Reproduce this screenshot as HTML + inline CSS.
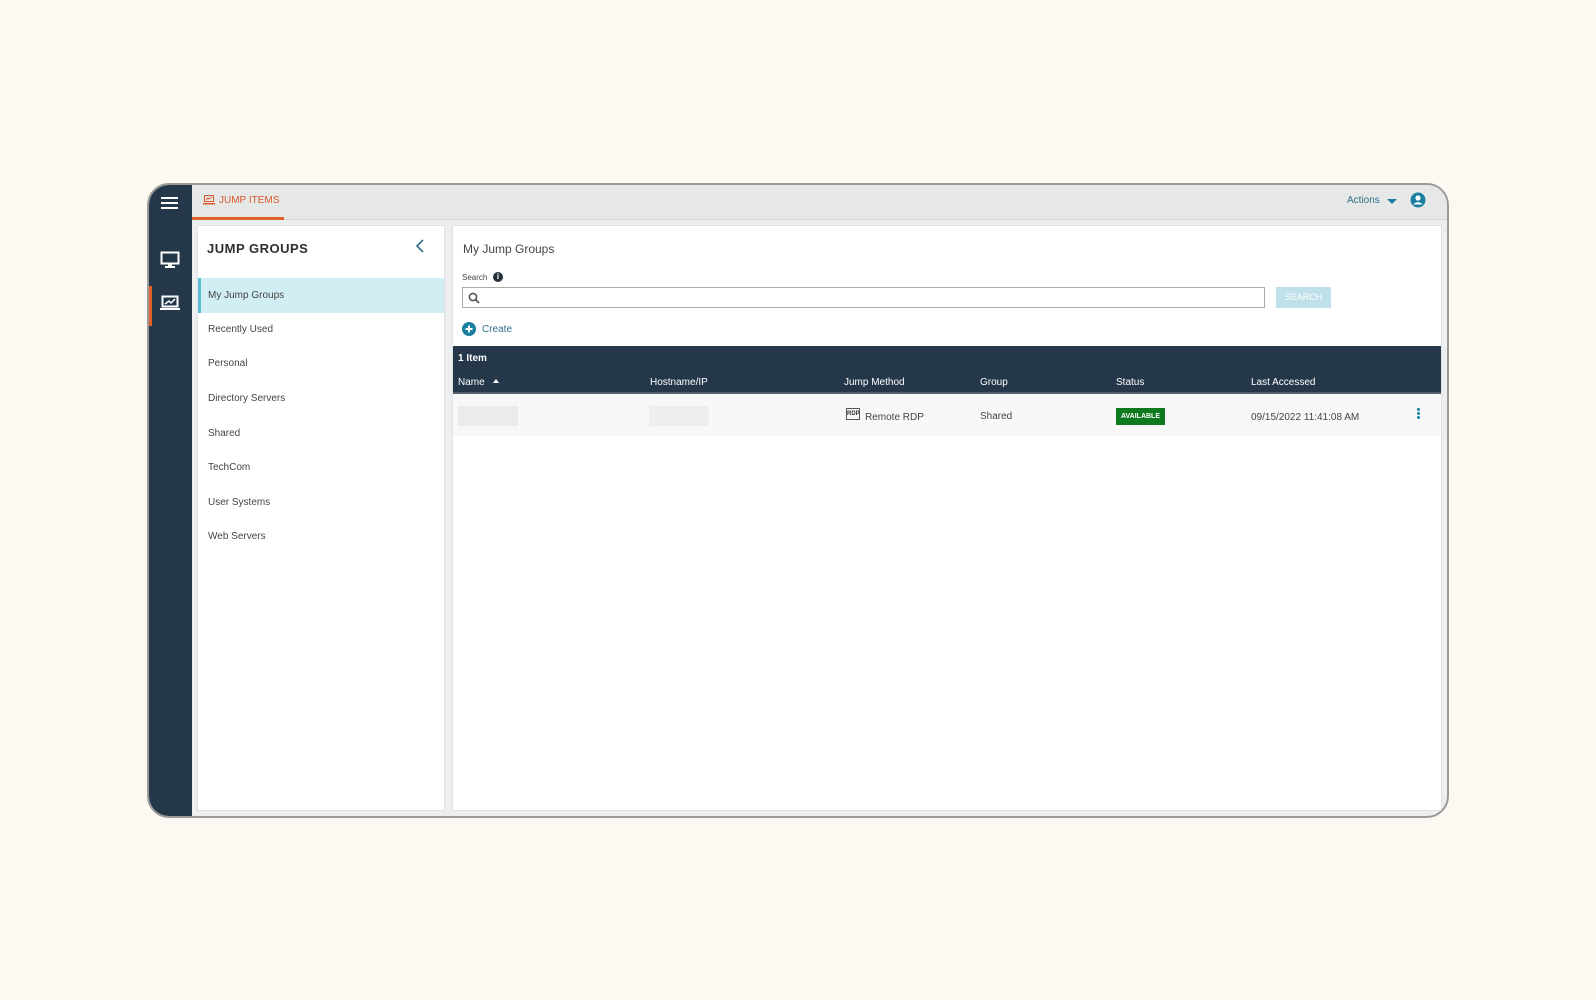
<!DOCTYPE html>
<html><head><meta charset="utf-8"><style>
*{box-sizing:border-box;margin:0;padding:0}
body{width:1596px;height:1000px;background:#fcf8f2;font-family:"Liberation Sans",sans-serif;position:relative;overflow:hidden;color:#333}
.frame{position:absolute;left:147px;top:183px;width:1302px;height:635px;border:2px solid #9a9a98;border-radius:22px;overflow:hidden;background:#eceeef}
.side{position:absolute;left:0;top:0;width:43px;height:100%;background:#25384a}
.top{position:absolute;left:43px;top:0;right:0;height:35px;background:#e6e8e8;border-bottom:1px solid #d4d6d6}
.abs{position:absolute}
.t{position:absolute;font-size:10px;color:#444;white-space:nowrap}
.lp{position:absolute;left:48px;top:40px;width:248px;height:586px;background:#fff;border:1px solid #e0e2e2}
.cp{position:absolute;left:303px;top:40px;width:990px;height:586px;background:#fff;border:1px solid #e0e2e2}
</style></head><body>
<div class="frame">
 <div class="side">
  <div class="abs" style="left:12px;top:12px;width:17px;height:2px;background:#fff;box-shadow:0 5px 0 #fff,0 10px 0 #fff"></div>
  <svg class="abs" style="left:11px;top:66px" width="20" height="18" viewBox="0 0 20 18"><rect x="1.5" y="1.5" width="17" height="11" fill="none" stroke="#fff" stroke-width="2"/><rect x="8" y="13" width="4" height="2" fill="#fff"/><rect x="5" y="15" width="10" height="2" fill="#fff"/></svg>
  <div class="abs" style="left:0;top:101px;width:3px;height:40px;background:#e0622a"></div>
  <svg class="abs" style="left:11px;top:110px" width="20" height="16" viewBox="0 0 20 16"><rect x="2.5" y="1.5" width="15" height="10" fill="none" stroke="#fff" stroke-width="2"/><path d="M5 9l4-3 2 2 4-4" stroke="#fff" stroke-width="1.5" fill="none"/><rect x="0" y="13" width="20" height="2" fill="#fff"/></svg>
 </div>
 <div class="top">
  <svg class="abs" style="left:11px;top:10px" width="12" height="10" viewBox="0 0 12 10"><rect x="1.5" y="0.5" width="9" height="6" fill="none" stroke="#d9582a"/><path d="M3 5l2-2 1 1 3-2" stroke="#d9582a" fill="none"/><rect x="0" y="8" width="12" height="1.5" fill="#d9582a"/></svg>
  <div class="t" style="left:27px;top:10px;color:#d9582a;font-size:10px">JUMP ITEMS</div>
  <div class="abs" style="left:0;top:32px;width:92px;height:3px;background:#e0622a"></div>
  <div class="t" style="left:1155px;top:10px;color:#2e6f87">Actions</div>
  <div class="abs" style="left:1195px;top:14px;border-left:5px solid transparent;border-right:5px solid transparent;border-top:5px solid #1a7fa0"></div>
  <svg class="abs" style="left:1218px;top:7px" width="16" height="16" viewBox="0 0 16 16"><circle cx="8" cy="8" r="7.5" fill="#1a7fa0"/><circle cx="8" cy="6" r="2.6" fill="#fff"/><path d="M3.5 12.5c1.5-3 7.5-3 9 0" fill="#fff"/></svg>
 </div>
 <div class="lp">
  <div class="t" style="left:9px;top:15px;font-size:13px;font-weight:bold;color:#2b2f33;letter-spacing:.5px">JUMP GROUPS</div>
  <svg class="abs" style="left:217px;top:13px" width="10" height="14" viewBox="0 0 10 14"><path d="M8 1L2 7l6 6" stroke="#2e6f87" stroke-width="1.6" fill="none"/></svg>
  <div class="abs" style="left:0;top:52px;width:246px;height:35px;background:#d2eef5;border-left:3px solid #5bbcd6"></div>
  <div class="t" style="left:10px;top:64px">My Jump Groups</div>
  <div class="t" style="left:10px;top:98px">Recently Used</div>
  <div class="t" style="left:10px;top:132px">Personal</div>
  <div class="t" style="left:10px;top:167px">Directory Servers</div>
  <div class="t" style="left:10px;top:202px">Shared</div>
  <div class="t" style="left:10px;top:236px">TechCom</div>
  <div class="t" style="left:10px;top:271px">User Systems</div>
  <div class="t" style="left:10px;top:305px">Web Servers</div>
 </div>
 <div class="cp">
  <div class="t" style="left:10px;top:16px;font-size:12px">My Jump Groups</div>
  <div class="t" style="left:9px;top:47px;font-size:8px">Search</div>
  <div class="abs" style="left:40px;top:46px;width:10px;height:10px;border-radius:50%;background:#25303a;color:#fff;font-size:8px;text-align:center;line-height:10px;font-weight:bold">i</div>
  <div class="abs" style="left:9px;top:61px;width:803px;height:21px;border:1px solid #aaa"></div>
  <svg class="abs" style="left:15px;top:66px" width="12" height="12" viewBox="0 0 12 12"><circle cx="5" cy="5" r="3.6" stroke="#555" stroke-width="1.6" fill="none"/><path d="M7.5 7.5L11 11" stroke="#555" stroke-width="1.8"/></svg>
  <div class="abs" style="left:823px;top:61px;width:55px;height:21px;background:#bfe0e8;color:#fff;font-size:9px;text-align:center;line-height:21px">SEARCH</div>
  <svg class="abs" style="left:9px;top:96px" width="14" height="14" viewBox="0 0 14 14"><circle cx="7" cy="7" r="7" fill="#1a7fa0"/><path d="M7 3.5v7M3.5 7h7" stroke="#fff" stroke-width="2"/></svg>
  <div class="t" style="left:29px;top:98px;color:#2e6f87">Create</div>
  <svg class="abs" style="left:1110px;top:96px" width="15" height="15" viewBox="0 0 16 16"><path d="M13 6A5.5 5.5 0 0 0 3 5M3 10a5.5 5.5 0 0 0 10 1" stroke="#333" stroke-width="1.6" fill="none"/><path d="M14 2v5h-5zM2 14V9h5z" fill="#333"/></svg>
  <div class="abs" style="left:0;top:120px;width:988px;height:48px;background:#25384a;border-bottom:2px solid #55616c"></div>
  <div class="t" style="left:5px;top:127px;color:#fff;font-weight:bold;font-size:10px">1 Item</div>
  <div class="t" style="left:5px;top:151px;color:#fff">Name</div>
  <div class="abs" style="left:40px;top:153px;border-left:3px solid transparent;border-right:3px solid transparent;border-bottom:4px solid #fff"></div>
  <div class="t" style="left:197px;top:151px;color:#fff">Hostname/IP</div>
  <div class="t" style="left:391px;top:151px;color:#fff">Jump Method</div>
  <div class="t" style="left:527px;top:151px;color:#fff">Group</div>
  <div class="t" style="left:663px;top:151px;color:#fff">Status</div>
  <div class="t" style="left:798px;top:151px;color:#fff">Last Accessed</div>
  <div class="abs" style="left:0;top:168px;width:988px;height:42px;background:#f8f8f8"></div>
  <div class="abs" style="left:5px;top:180px;width:60px;height:20px;background:#ececec"></div>
  <div class="abs" style="left:196px;top:180px;width:60px;height:20px;background:#eeeeee"></div>
  <div class="abs" style="left:393px;top:182px;width:14px;height:12px;border:1px solid #555;font-size:6px;line-height:10px;text-align:center;font-weight:bold;color:#333">RDP</div>
  <div class="t" style="left:412px;top:186px">Remote RDP</div>
  <div class="t" style="left:527px;top:185px">Shared</div>
  <div class="abs" style="left:663px;top:182px;width:49px;height:17px;background:#0e7a1e;color:#fff;font-size:7px;line-height:17px;text-align:center;font-weight:bold">AVAILABLE</div>
  <div class="t" style="left:798px;top:186px">09/15/2022 11:41:08 AM</div>
  <div class="abs" style="left:964px;top:182px;width:3px;height:3px;border-radius:50%;background:#1a7fa0;box-shadow:0 4px 0 #1a7fa0,0 8px 0 #1a7fa0"></div>
 </div>
</div>
</body></html>
